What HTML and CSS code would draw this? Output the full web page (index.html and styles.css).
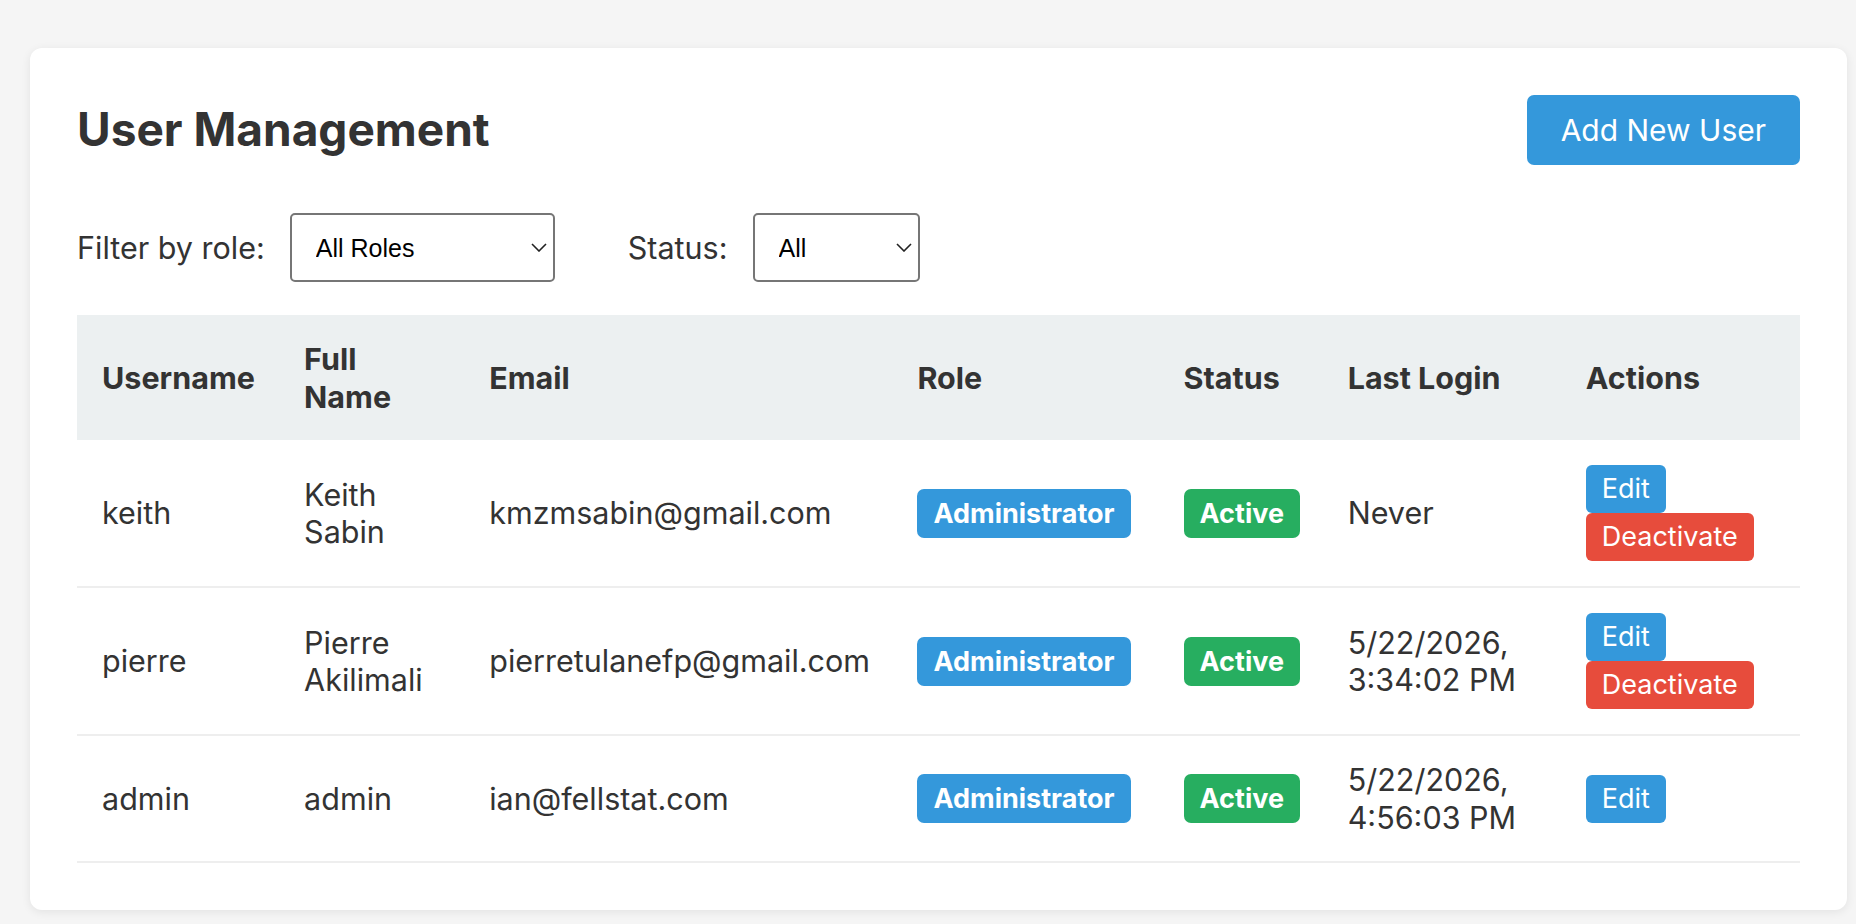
FILE: index.html
```html
<!DOCTYPE html>
<html lang="en">
<head>
    <meta charset="UTF-8">
    <meta name="viewport" content="width=device-width, initial-scale=1.0">
    <title>User Management</title>
    <link rel="stylesheet" href="styles.css">
</head>
<body>
    <div class="card">
        <div class="card-header">
            <h2>User Management</h2>
            <button class="btn-add">Add New User</button>
        </div>

        <div class="filters">
            <div class="filter-group">
                <label for="roleFilter">Filter by role:</label>
                <div class="select-wrap role-select">
                    <select id="roleFilter">
                        <option>All Roles</option>
                        <option>Administrator</option>
                        <option>User</option>
                    </select>
                    <svg class="chevron" viewBox="0 0 16 9" width="16" height="9"><path d="M1 1l7 7 7-7" fill="none" stroke="#222" stroke-width="1.6"/></svg>
                </div>
            </div>
            <div class="filter-group">
                <label for="statusFilter">Status:</label>
                <div class="select-wrap status-select">
                    <select id="statusFilter">
                        <option>All</option>
                        <option>Active</option>
                        <option>Inactive</option>
                    </select>
                    <svg class="chevron" viewBox="0 0 16 9" width="16" height="9"><path d="M1 1l7 7 7-7" fill="none" stroke="#222" stroke-width="1.6"/></svg>
                </div>
            </div>
        </div>

        <table class="users-table">
            <thead>
                <tr>
                    <th class="col-username">Username</th>
                    <th class="col-fullname">Full Name</th>
                    <th class="col-email">Email</th>
                    <th class="col-role">Role</th>
                    <th class="col-status">Status</th>
                    <th class="col-login">Last Login</th>
                    <th class="col-actions">Actions</th>
                </tr>
            </thead>
            <tbody>
                <tr>
                    <td>keith</td>
                    <td>Keith Sabin</td>
                    <td>kmzmsabin@gmail.com</td>
                    <td><span class="badge badge-role">Administrator</span></td>
                    <td><span class="badge badge-active">Active</span></td>
                    <td>Never</td>
                    <td>
                        <div class="actions">
                            <button class="btn-sm btn-edit">Edit</button>
                            <button class="btn-sm btn-deactivate">Deactivate</button>
                        </div>
                    </td>
                </tr>
                <tr>
                    <td>pierre</td>
                    <td>Pierre Akilimali</td>
                    <td>pierretulanefp@gmail.com</td>
                    <td><span class="badge badge-role">Administrator</span></td>
                    <td><span class="badge badge-active">Active</span></td>
                    <td>5/22/2026, 3:34:02 PM</td>
                    <td>
                        <div class="actions">
                            <button class="btn-sm btn-edit">Edit</button>
                            <button class="btn-sm btn-deactivate">Deactivate</button>
                        </div>
                    </td>
                </tr>
                <tr>
                    <td>admin</td>
                    <td>admin</td>
                    <td>ian@fellstat.com</td>
                    <td><span class="badge badge-role">Administrator</span></td>
                    <td><span class="badge badge-active">Active</span></td>
                    <td>5/22/2026, 4:56:03 PM</td>
                    <td>
                        <div class="actions">
                            <button class="btn-sm btn-edit">Edit</button>
                        </div>
                    </td>
                </tr>
            </tbody>
        </table>
    </div>
</body>
</html>
```

FILE: styles.css
```css
body {
    font-family: Inter, "Liberation Sans", sans-serif;
    margin: 0;
    background-color: #f5f5f5;
    color: #333;
    font-size: 30.5px;
    line-height: 37.5px;
}
.card {
    margin: 48px 9px 14px 30px;
    padding: 47px;
    background: #fff;
    border-radius: 12px;
    box-shadow: 0 2px 10px rgba(0,0,0,0.08);
}
.card-header {
    display: flex;
    justify-content: space-between;
    align-items: center;
    margin-bottom: 48px;
}
h2 {
    margin: 0;
    font-size: 46px;
    font-weight: 700;
    color: #333;
}
.btn-add {
    font-family: Inter, "Liberation Sans", sans-serif;
    font-size: 30px;
    line-height: 36px;
    padding: 17px 34px;
    background: #3498db;
    color: #fff;
    border: none;
    border-radius: 7px;
    cursor: pointer;
}
.filters {
    display: flex;
    align-items: center;
    gap: 73px;
    margin-bottom: 33px;
}
.filter-group {
    display: flex;
    align-items: center;
    gap: 25px;
}
.select-wrap {
    position: relative;
}
.select-wrap select {
    appearance: none;
    -webkit-appearance: none;
    font-family: "Liberation Sans", Arial, sans-serif;
    font-size: 25px;
    color: #000;
    height: 69px;
    padding: 0 40px 0 24px;
    border: 2px solid #767676;
    border-radius: 5px;
    background: #fff;
}
.role-select select {
    width: 265px;
}
.status-select select {
    width: 167px;
}
.chevron {
    position: absolute;
    right: 8px;
    top: 30px;
    pointer-events: none;
}
.users-table {
    width: 100%;
    border-collapse: collapse;
    table-layout: fixed;
}
.users-table th {
    box-sizing: border-box;
    background: #ecf0f1;
    text-align: left;
    font-weight: 700;
    padding: 25px;
}
.users-table td {
    padding: 25px;
    border-bottom: 2px solid #eee;
    vertical-align: middle;
}
.col-username { width: 202px; }
.col-fullname { width: 185px; }
.col-email { width: 428px; }
.col-role { width: 266px; }
.col-status { width: 164px; }
.col-login { width: 238px; }
.col-actions { width: 239px; }
.badge {
    display: inline-block;
    font-size: 27px;
    font-weight: 700;
    line-height: 31px;
    padding: 9px 16px;
    border-radius: 7px;
    color: #fff;
    vertical-align: middle;
}
.badge-role {
    background: #3498db;
}
.badge-active {
    background: #27ae60;
}
.actions {
    display: flex;
    flex-direction: column;
    align-items: flex-start;
}
.btn-sm {
    font-family: Inter, "Liberation Sans", sans-serif;
    font-size: 27px;
    line-height: 30px;
    padding: 9px 16px;
    border: none;
    border-radius: 6px;
    color: #fff;
    cursor: pointer;
}
.btn-edit {
    background: #3498db;
}
.btn-deactivate {
    background: #e74c3c;
}
```
